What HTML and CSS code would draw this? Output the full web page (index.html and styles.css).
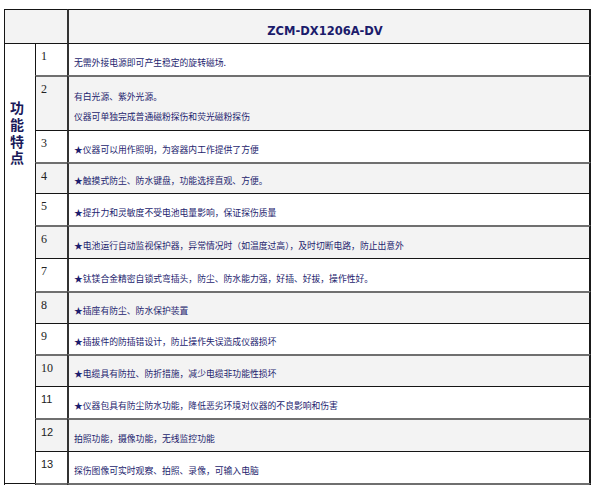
FILE: index.html
```html
<!DOCTYPE html>
<html>
<head>
<meta charset="utf-8">
<title>ZCM-DX1206A-DV</title>
<link rel="stylesheet" href="styles.css">
</head>
<body>
<div class="spec">
  <div class="hd-blank"></div>
  <div class="hd-title">ZCM-DX1206A-DV</div>
  <div class="label"><span class="label-text">功能特点</span></div>

  <div class="num">1</div>
  <div class="txt">无需外接电源即可产生稳定的旋转磁场.</div>

  <div class="num grey">2</div>
  <div class="txt grey two"><p>有白光源、紫外光源。</p><p>仪器可单独完成普通磁粉探伤和荧光磁粉探伤</p></div>

  <div class="num">3</div>
  <div class="txt">★仪器可以用作照明，为容器内工作提供了方便</div>

  <div class="num grey">4</div>
  <div class="txt grey">★触摸式防尘、防水键盘，功能选择直观、方便。</div>

  <div class="num">5</div>
  <div class="txt">★提升力和灵敏度不受电池电量影响，保证探伤质量</div>

  <div class="num grey">6</div>
  <div class="txt grey">★电池运行自动监视保护器，异常情况时（如温度过高），及时切断电路，防止出意外</div>

  <div class="num">7</div>
  <div class="txt">★钛镁合金精密自锁式弯插头，防尘、防水能力强，好插、好拔，操作性好。</div>

  <div class="num grey">8</div>
  <div class="txt grey">★插座有防尘、防水保护装置</div>

  <div class="num">9</div>
  <div class="txt">★插拔件的防插错设计，防止操作失误造成仪器损坏</div>

  <div class="num grey">10</div>
  <div class="txt grey">★电缆具有防拉、防折措施，减少电缆非功能性损坏</div>

  <div class="num sans">11</div>
  <div class="txt">★仪器包具有防尘防水功能，降低恶劣环境对仪器的不良影响和伤害</div>

  <div class="num grey sans">12</div>
  <div class="txt grey">拍照功能，摄像功能，无线监控功能</div>

  <div class="num sans">13</div>
  <div class="txt">探伤图像可实时观察、拍照、录像，可输入电脑</div>

  <div class="foot-blank"></div>
  <div class="foot-num grey"></div>
  <div class="txt grey"></div>
</div>
</body>
</html>
```

FILE: styles.css
```css
* { box-sizing: border-box; }

html, body {
  margin: 0;
  padding: 0;
  background: #ffffff;
}

body {
  padding: 9px 0 0 4px;
  overflow: hidden;
  height: 485px;
}

.spec {
  display: grid;
  grid-template-columns: 31px 32px 524px;
  grid-template-rows: 34px 32px 55px 32px 31px 32px 33px 33px 32px 31px 32px 32px 33px 32px 30px;
  font-family: "Noto Sans CJK SC", "Noto Sans", sans-serif;
  color: #1d1d6e;
}

.spec > div {
  border-top: 1px solid #151515;
  background: #ffffff;
}

.hd-blank {
  grid-column: 1 / 3;
  background: #f3f3f3 !important;
  border-left: 1px solid #151515;
}

.hd-title {
  background: #f3f3f3 !important;
  border-left: 2px solid #333333;
  border-right: 2px solid #1a1a1a;
  font-family: "DejaVu Sans", Verdana, sans-serif;
  font-weight: bold;
  font-size: 11.5px;
  color: #1b1b6b;
  text-align: center;
  padding: 14px 8px 0 0;
  line-height: 14px;
}

.label {
  grid-column: 1;
  grid-row: 2 / 15;
  border-left: 1px solid #151515;
  padding: 57px 0 0 4px;
}

.label-text {
  display: block;
  writing-mode: vertical-rl;
  text-orientation: upright;
  font-weight: bold;
  font-size: 14px;
  line-height: 16px;
  letter-spacing: 2.7px;
  color: #1a1a5a;
}

.num {
  border-left: 1px solid #151515;
  font-family: "Liberation Serif", "Times New Roman", serif;
  font-size: 12px;
  line-height: 14px;
  color: #222222;
  padding: 5px 0 0 5px;
}

.num.sans {
  font-family: "Liberation Sans", Arial, sans-serif;
  font-size: 11px;
}

.txt {
  border-left: 2px solid #333333;
  border-right: 2px solid #1a1a1a;
  font-size: 8.8px;
  line-height: 16px;
  padding: 0 4px 4px 5px;
  display: flex;
  flex-direction: column;
  justify-content: flex-end;
  white-space: nowrap;
}

.txt.two {
  line-height: 20px;
  padding-bottom: 3px;
}

.txt p {
  margin: 0;
}

.spec > .grey {
  background: #f3f3f3;
  border-top: 2px solid #6f6f6f;
}

.foot-blank {
  border-left: 1px solid #151515;
}

.foot-num {
  border-left: 1px solid #151515;
}
```
